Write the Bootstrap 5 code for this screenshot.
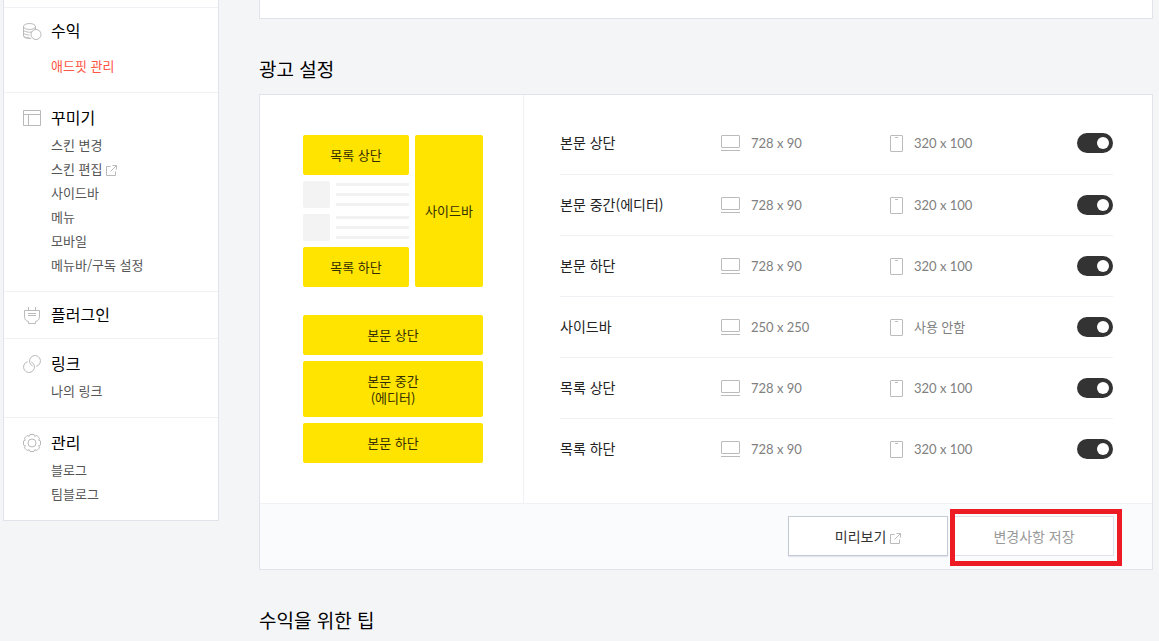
<!DOCTYPE html>
<html lang="ko">
<head>
<meta charset="utf-8">
<meta name="viewport" content="width=device-width, initial-scale=1">
<title>광고 설정</title>
<link href="https://cdn.jsdelivr.net/npm/bootstrap@5.3.0/dist/css/bootstrap.min.css" rel="stylesheet">
<style>
  :root { --line: #e0e3ec; --soft: #f0f1f5; --ad: #ffe400; }
  body { background: #f4f5f7; color: #000; font-family: "Noto Sans CJK KR", sans-serif; font-size: 14px; line-height: 20px; }
  .page { gap: 40px; padding: 0 6px 0 3px; }
  .panel { background: #fff; border: 1px solid var(--line); }
  .side { flex: 0 0 216px; }
  .side svg { color: #b9b9b9; }
  .side-top { height: 7px; }
  .side-group { border-top: 1px solid var(--soft); padding: 13px 18px 14px; }
  .side-group.roomy { padding-top: 11px; }
  .side-group.single { padding: 11px 18px; }
  .side-title { height: 24px; padding-bottom: 2px; font-size: 16px; line-height: 22px; font-weight: 400; gap: 9px; margin: 0; }
  .side-title svg { margin-top: 4px; }
  .side-list { margin: 3px 0 0 29px; font-size: 13px; line-height: 24px; }
  .roomy .side-list { margin-top: 11px; }
  .side-list a { color: #555; text-decoration: none; }
  .side-list a.current { color: #ff5544; }
  .section-title { font-size: 19px; line-height: 28px; font-weight: 400; margin: 36px 0 11px; }
  .prev-end { height: 19px; }
  .preview { flex: 0 0 264px; padding: 40px 40px 40px 43px; border-right: 1px solid var(--soft); }
  .stack { gap: 6px; }
  .slot { background: var(--ad); color: #332e00; border-radius: 2px; min-height: 40px; padding-bottom: 2px; font-size: 13px; line-height: 17px; }
  .slot.tall { min-height: 56px; padding-bottom: 0; }
  .slot.side-slot { flex: 0 0 68px; }
  .thumb { width: 27px; height: 27px; background: #f3f3f3; border-radius: 2px; }
  .bars { height: 27px; padding: 2px 0; gap: 7px; }
  .bars i { height: 3px; background: #f2f2f2; }
  .slots-list { padding: 18px 39px 0 36px; }
  .ad-row { display: grid; grid-template-columns: 161fr 169fr 187fr 36px; align-items: center; min-height: 61px; border-bottom: 1px solid var(--soft); }
  .ad-row:first-child { min-height: 62px; padding-bottom: 1px; }
  .ad-row:last-child { min-height: 60px; border-bottom: 0; }
  .ad-name { color: #222; padding-bottom: 3px; }
  .ad-size { color: #808080; font-family: Lato, "Noto Sans CJK KR", sans-serif; font-size: 13px; gap: 11px; }
  .ad-size svg { color: #bbb; }
  .form-check-input.toggle { width: 36px; height: 20px; margin: 0; border: 0; border-radius: 10px; background-color: #bbb; background-size: 20px 20px; background-repeat: no-repeat; background-position: left center; background-image: url("data:image/svg+xml,%3csvg xmlns='http://www.w3.org/2000/svg' viewBox='0 0 20 20'%3e%3ccircle cx='10' cy='10' r='6' fill='%23fff'/%3e%3c/svg%3e"); }
  .form-check-input.toggle:checked { background-color: #333; background-position: right center; background-image: url("data:image/svg+xml,%3csvg xmlns='http://www.w3.org/2000/svg' viewBox='0 0 20 20'%3e%3ccircle cx='10' cy='10' r='6' fill='%23fff'/%3e%3c/svg%3e"); }
  .actions { background: #fafbfd; border-top: 1px solid var(--soft); padding: 12px 38px 13px; gap: 6px; }
  .actions .btn { width: 160px; height: 40px; padding: 0; border-radius: 0; font-size: 14px; line-height: 20px; background: #fff; }
  .btn-preview { border: 1px solid #c3ccd6; color: #333; box-shadow: 0 1px 1px #e3e7ec; }
  .btn-preview svg { color: #bbb; }
  .btn-save { border: 1px solid var(--line); color: #999; }
  .marker { position: absolute; inset: -7px -8px -10px -4px; border: 5px solid #ed1c24; pointer-events: none; }
</style>
</head>
<body>
<svg class="d-none">
  <symbol id="i-out" viewBox="0 0 11 11"><path d="M4.500 1.500h-4v9h9v-4M6.500 .5h4v4M10.500.5L4.500 6.500" fill="none" stroke="currentColor"/></symbol>
  <symbol id="i-pc" viewBox="0 0 19 17"><rect x=".5" y=".5" width="18" height="12" rx=".5" fill="none" stroke="currentColor"/><path d="M0 15.500h19" stroke="currentColor"/></symbol>
  <symbol id="i-phone" viewBox="0 0 13 17"><rect x=".5" y=".5" width="12" height="16" rx=".5" fill="none" stroke="currentColor"/><path d="M5 2.500h3" stroke="currentColor"/></symbol>
</svg>
<div class="page d-flex align-items-start">
  <nav class="side panel border-top-0" aria-label="관리 메뉴">
    <div class="side-top"></div>
    <section class="side-group roomy">
      <h2 class="side-title d-flex align-items-center">
        <svg width="20" height="20" viewBox="0 0 20 20" fill="none" stroke="currentColor"><ellipse cx="7.500" cy="4.500" rx="6" ry="3"/><path d="M1.500 4.500v3c0 1.500 2.500 2.700 6 2.700 1 0 2-.1 2.700-.3M13.500 4.500v3M1.500 7.500v3c0 1.500 2.500 2.500 6 2.500M1.500 10.500v3c0 1.300 2.500 2.300 6 2.300M1.500 13.500c0 2 2.500 3 7.500 3"/><circle cx="14" cy="12.500" r="5"/></svg>수익</h2>
      <ul class="side-list list-unstyled mb-0"><li><a class="current" href="#">애드핏 관리</a></li></ul>
    </section>
    <section class="side-group">
      <h2 class="side-title d-flex align-items-center">
        <svg width="20" height="20" viewBox="0 0 20 20" fill="none" stroke="currentColor"><path d="M1.500 1.500h17v15h-17zM1.500 5.500h17M6.500 5.500v11"/></svg>꾸미기</h2>
      <ul class="side-list list-unstyled mb-0">
        <li><a href="#">스킨 변경</a></li>
        <li><a href="#">스킨 편집 <svg width="11" height="11"><use href="#i-out"/></svg></a></li>
        <li><a href="#">사이드바</a></li>
        <li><a href="#">메뉴</a></li>
        <li><a href="#">모바일</a></li>
        <li><a href="#">메뉴바/구독 설정</a></li>
      </ul>
    </section>
    <section class="side-group single">
      <h2 class="side-title d-flex align-items-center">
        <svg width="20" height="20" viewBox="0 0 20 20" fill="none" stroke="currentColor"><path d="M2.500 4.500h15v6c0 3-1.500 4.500-4 5v2h-7v-2c-2.500-.5-4-2-4-5zM6.500 1v3.500M13.500 1v3.500M6 7.500h8M6 9.500h8"/></svg>플러그인</h2>
    </section>
    <section class="side-group">
      <h2 class="side-title d-flex align-items-center">
        <svg width="20" height="20" viewBox="0 0 20 20" fill="none" stroke="currentColor"><path d="M10.700 11A5.500 5.500 0 1 1 14.400 11.300M9.300 7A5.500 5.500 0 1 1 5.600 6.700"/></svg>링크</h2>
      <ul class="side-list list-unstyled mb-0"><li><a href="#">나의 링크</a></li></ul>
    </section>
    <section class="side-group">
      <h2 class="side-title d-flex align-items-center">
        <svg width="20" height="20" viewBox="0 1 20 20" fill="none" stroke="currentColor" stroke-linejoin="round"><circle cx="10" cy="10" r="4"/><path d="M8 1.500h4l.7 1.800 2.200-.8 2.600 2.600-.8 2.200 1.800.7v4l-1.800.7.8 2.200-2.600 2.600-2.200-.8-.7 1.800H8l-.7-1.800-2.200.8-2.600-2.600.8-2.200L1.500 12V8l1.800-.7-.8-2.200 2.600-2.600 2.200.8z"/></svg>관리</h2>
      <ul class="side-list list-unstyled mb-0">
        <li><a href="#">블로그</a></li>
        <li><a href="#">팀블로그</a></li>
      </ul>
    </section>
  </nav>

  <main class="flex-grow-1">
    <div class="prev-end panel border-top-0"></div>

    <h1 class="section-title">광고 설정</h1>
    <div class="panel">
      <div class="d-flex">
        <div class="preview">
          <div class="stack d-flex">
            <div class="stack d-flex flex-column flex-grow-1">
              <div class="slot d-flex align-items-center justify-content-center">목록 상단</div>
              <div class="stack d-flex"><div class="thumb"></div><div class="bars d-flex flex-column flex-grow-1"><i></i><i></i><i></i></div></div>
              <div class="stack d-flex"><div class="thumb"></div><div class="bars d-flex flex-column flex-grow-1"><i></i><i></i><i></i></div></div>
              <div class="slot d-flex align-items-center justify-content-center">목록 하단</div>
            </div>
            <div class="slot side-slot d-flex align-items-center justify-content-center">사이드바</div>
          </div>
          <div class="stack d-flex flex-column pt-4 mt-1">
            <div class="slot d-flex align-items-center justify-content-center">본문 상단</div>
            <div class="slot tall d-flex align-items-center justify-content-center text-center">본문 중간<br>(에디터)</div>
            <div class="slot d-flex align-items-center justify-content-center">본문 하단</div>
          </div>
        </div>
        <div class="slots-list flex-grow-1">
          <div class="ad-row">
            <label class="ad-name" for="s1">본문 상단</label>
            <div class="ad-size d-flex align-items-center"><svg width="19" height="17"><use href="#i-pc"/></svg>728 x 90</div>
            <div class="ad-size d-flex align-items-center"><svg width="13" height="17"><use href="#i-phone"/></svg>320 x 100</div>
            <input class="form-check-input toggle" type="checkbox" role="switch" id="s1" checked>
          </div>
          <div class="ad-row">
            <label class="ad-name" for="s2">본문 중간(에디터)</label>
            <div class="ad-size d-flex align-items-center"><svg width="19" height="17"><use href="#i-pc"/></svg>728 x 90</div>
            <div class="ad-size d-flex align-items-center"><svg width="13" height="17"><use href="#i-phone"/></svg>320 x 100</div>
            <input class="form-check-input toggle" type="checkbox" role="switch" id="s2" checked>
          </div>
          <div class="ad-row">
            <label class="ad-name" for="s3">본문 하단</label>
            <div class="ad-size d-flex align-items-center"><svg width="19" height="17"><use href="#i-pc"/></svg>728 x 90</div>
            <div class="ad-size d-flex align-items-center"><svg width="13" height="17"><use href="#i-phone"/></svg>320 x 100</div>
            <input class="form-check-input toggle" type="checkbox" role="switch" id="s3" checked>
          </div>
          <div class="ad-row">
            <label class="ad-name" for="s4">사이드바</label>
            <div class="ad-size d-flex align-items-center"><svg width="19" height="17"><use href="#i-pc"/></svg>250 x 250</div>
            <div class="ad-size d-flex align-items-center"><svg width="13" height="17"><use href="#i-phone"/></svg>사용 안함</div>
            <input class="form-check-input toggle" type="checkbox" role="switch" id="s4" checked>
          </div>
          <div class="ad-row">
            <label class="ad-name" for="s5">목록 상단</label>
            <div class="ad-size d-flex align-items-center"><svg width="19" height="17"><use href="#i-pc"/></svg>728 x 90</div>
            <div class="ad-size d-flex align-items-center"><svg width="13" height="17"><use href="#i-phone"/></svg>320 x 100</div>
            <input class="form-check-input toggle" type="checkbox" role="switch" id="s5" checked>
          </div>
          <div class="ad-row">
            <label class="ad-name" for="s6">목록 하단</label>
            <div class="ad-size d-flex align-items-center"><svg width="19" height="17"><use href="#i-pc"/></svg>728 x 90</div>
            <div class="ad-size d-flex align-items-center"><svg width="13" height="17"><use href="#i-phone"/></svg>320 x 100</div>
            <input class="form-check-input toggle" type="checkbox" role="switch" id="s6" checked>
          </div>
        </div>
      </div>
      <div class="actions d-flex justify-content-end">
        <button type="button" class="btn btn-preview">미리보기 <svg width="11" height="11"><use href="#i-out"/></svg></button>
        <div class="position-relative">
          <button type="button" class="btn btn-save">변경사항 저장</button>
          <div class="marker"></div>
        </div>
      </div>
    </div>

    <h2 class="section-title mb-0">수익을 위한 팁</h2>
  </main>
</div>
<script src="https://cdn.jsdelivr.net/npm/bootstrap@5.3.0/dist/js/bootstrap.bundle.min.js"></script>
</body>
</html>
